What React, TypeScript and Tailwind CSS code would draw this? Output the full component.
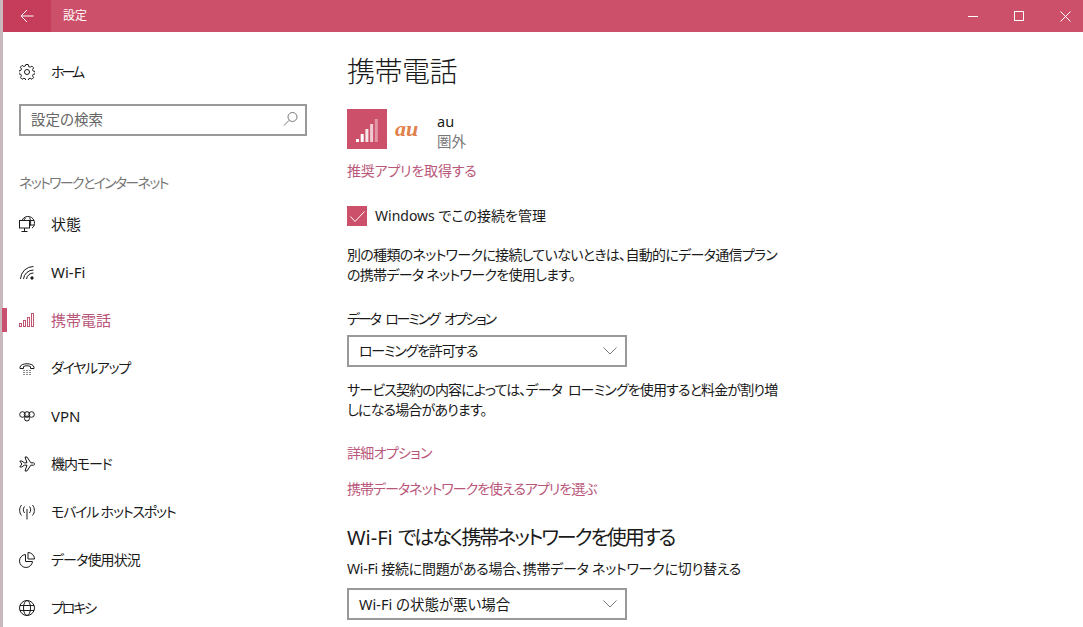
import React from "react";

function Icon({ children }: { children: React.ReactNode }) {
  return (
    <svg width="16" height="16" viewBox="0 0 16 16" fill="none" stroke="#1a1a1a" strokeWidth="1" className="shrink-0">
      {children}
    </svg>
  );
}

const items = [
  {
    label: "状態",
    text: "",
    icon: (
      <Icon>
        <path d="M3 4.500a6.500 6.500 0 0 1 12.500 3c0 2-1 3.600-2.500 4.600" />
        <path d="M6.500 2c-.8.800-1.200 1.500-1.500 2.500M10.500 1.500c1.200 2 1.500 5 .8 8M5.500 4.500h9.500M11 9h4" />
        <rect x="0.500" y="4.500" width="10" height="7.500" />
        <path d="M5.500 12v3M2.500 15.500h6" />
      </Icon>
    ),
  },
  {
    label: "Wi-Fi",
    text: "",
    icon: (
      <Icon>
        <path d="M1.500 15a13 13 0 0 1 13-12.500" />
        <path d="M4.500 15a10 10 0 0 1 10-9" />
        <path d="M7.500 15a7 7 0 0 1 7-6" />
        <circle cx="13" cy="14" r="1.200" fill="#1a1a1a" />
      </Icon>
    ),
  },
  {
    label: "携帯電話",
    text: "",
    active: true,
    icon: (
      <svg width="16" height="16" viewBox="0 0 16 16" fill="none" stroke="#c2536f" strokeWidth="1" className="shrink-0">
        <rect x="0.500" y="11.500" width="2" height="3" />
        <rect x="4.500" y="8.500" width="2" height="6" />
        <rect x="8.500" y="5.500" width="2" height="9" />
        <rect x="12.500" y="1.500" width="2" height="13" />
      </svg>
    ),
  },
  {
    label: "ダイヤルアップ",
    text: "text-[14px] tracking-[-1.300px]",
    icon: (
      <Icon>
        <path d="M1 7.500c0-5 14-5 14 0v1h-3.500v-2c-2-1-5-1-7 0v2H1z" />
        <path d="M4.500 10.500h1M7.500 10.500h1M10.500 10.500h1M4.500 12.500h1M7.500 12.500h1M10.500 12.500h1M4.500 14.500h1M7.500 14.500h1M10.500 14.500h1" />
      </Icon>
    ),
  },
  {
    label: "VPN",
    text: "",
    icon: (
      <Icon>
        <circle cx="3.500" cy="6.500" r="2.800" />
        <circle cx="12.500" cy="6.500" r="2.800" />
        <circle cx="8" cy="6.500" r="2.800" />
        <circle cx="8" cy="10.500" r="2.500" />
      </Icon>
    ),
  },
  {
    label: "機内モード",
    text: "text-[14px] tracking-[-1.100px]",
    icon: (
      <Icon>
        <path d="M.8 5l2 3-2 3h2l2.500-1.800H8L6 15h2l3.800-5.800H14c2.300-.2 2.300-2.200 0-2.400h-2.200L8 1H6l2 5.800H5.300L2.800 5z" />
      </Icon>
    ),
  },
  {
    label: "モバイル ホットスポット",
    text: "text-[14px] tracking-[-1.200px]",
    icon: (
      <Icon>
        <path d="M8 5v10.500" />
        <path d="M5.500 2.500c-1.500 2-1.500 4.500 0 6.500M2.500 1c-2.500 3-2.500 7.500 0 10.500M10.500 2.500c1.500 2 1.500 4.500 0 6.500M13.500 1c2.500 3 2.500 7.500 0 10.500" />
      </Icon>
    ),
  },
  {
    label: "データ使用状況",
    text: "text-[14px] tracking-[-0.900px]",
    icon: (
      <Icon>
        <path d="M6.500 2.500a6.500 6.500 0 1 0 7 7H6.500z" />
        <path d="M9 .5v6.500h6.500a6.500 6.500 0 0 0-6.500-6.500z" />
      </Icon>
    ),
  },
  {
    label: "プロキシ",
    text: "text-[14px] tracking-[-2.200px]",
    icon: (
      <Icon>
        <circle cx="8" cy="8" r="7.500" />
        <ellipse cx="8" cy="8" rx="3.500" ry="7.500" />
        <path d="M1 5.500h14M1 10.500h14" />
      </Icon>
    ),
  },
];

function Select({ label, text }: { label: string; text: string }) {
  return (
    <div className="flex h-[32px] w-[280px] items-center justify-between border-2 border-[#999999] pl-[10px] pr-[8px] text-[#1a1a1a]">
      <span className={text}>{label}</span>
      <svg width="14" height="8" viewBox="0 0 14 8" fill="none" stroke="#7a7a7a" strokeWidth="1">
        <path d="M.5.500 7 7l6.500-6.500" />
      </svg>
    </div>
  );
}

export default function App() {
  return (
    <div className="h-[627px] w-[1083px] overflow-hidden bg-[#c9b9bd] pl-[3px] font-['Noto_Sans','Noto_Sans_CJK_JP',sans-serif] [font-feature-settings:'palt'] leading-none">
      <div className="flex h-full flex-col bg-white">
        {/* title bar */}
        <header className="flex h-[32px] shrink-0 items-center bg-[#cc5069] text-white">
          <div className="flex h-full w-[48px] items-center justify-center bg-[#c63d5b]">
            <svg width="14" height="14" viewBox="0 0 14 14" fill="none" stroke="#fff" strokeWidth="1">
              <path d="M13.500 7H1M7 1 1 7l6 6" />
            </svg>
          </div>
          <span className="ml-[12px] text-[12px]">設定</span>
          <div className="ml-auto mr-[-5px] flex items-center">
            <div className="flex w-[46px] justify-center">
              <div className="h-px w-[10px] bg-white" />
            </div>
            <div className="flex w-[46px] justify-center">
              <div className="h-[10px] w-[10px] border border-white" />
            </div>
            <div className="flex w-[46px] justify-center">
              <svg width="11" height="11" viewBox="0 0 11 11" stroke="#fff" strokeWidth="1">
                <path d="M.5.500l10 10M10.500.500l-10 10" />
              </svg>
            </div>
          </div>
        </header>

        <div className="flex min-h-0 flex-1">
          {/* sidebar */}
          <aside className="w-[344px] shrink-0">
            <div className="mt-[16px] flex h-[48px] items-center pl-[16px] text-[#1a1a1a]">
              <Icon>
                <circle cx="8" cy="8" r="2.500" />
                <path d="M6.800.5h2.400l.4 2 1.500.7 1.800-1.100 1.700 1.700-1.100 1.800.7 1.500 2 .4v2.400l-2 .4-.7 1.500 1.100 1.800-1.700 1.700-1.800-1.100-1.500.7-.4 2H6.800l-.4-2-1.500-.7-1.800 1.100-1.700-1.700 1.100-1.800-.7-1.500-2-.4V6.800l2-.4.7-1.500-1.100-1.800 1.700-1.700 1.800 1.100 1.500-.7z" />
              </Icon>
              <span className="ml-[16px] text-[14px] tracking-[-3px]">ホーム</span>
            </div>
            <div className="ml-[16px] mt-[8px] flex h-[32px] w-[288px] items-center justify-between border-2 border-[#999999] pb-[2px] pl-[10px] pr-[6px] text-[14.500px] text-[#666666]">
              <span>設定の検索</span>
              <svg width="16" height="16" viewBox="0 0 16 16" fill="none" stroke="#777777" strokeWidth="1">
                <circle cx="9.500" cy="6" r="4.500" />
                <path d="M6.300 9.200 1 14.500" />
              </svg>
            </div>
            <div className="ml-[16px] mt-[40px] text-[14px] tracking-[-1.700px] text-[#777777]">ネットワークとインターネット</div>
            <nav className="mt-[10px]">
              {items.map((item) => (
                <div key={item.label} className="relative flex h-[48px] items-center pl-[16px] text-[15px] text-[#1a1a1a]">
                  {item.active && <div className="absolute left-[-1px] top-[12px] h-[24px] w-[5px] bg-[#c9506f]" />}
                  {item.icon}
                  <span className={`ml-[16px] ${item.text} ${item.active ? "text-[#b9577a]" : ""}`}>{item.label}</span>
                </div>
              ))}
            </nav>
          </aside>

          {/* main pane */}
          <main className="min-w-0 flex-1 text-[#1a1a1a]">
            <h1 className="mt-[24px] text-[28px] font-light leading-[30px] tracking-[-0.500px]">携帯電話</h1>
            <div className="mt-[23px] flex h-[40px] items-center">
              <div className="flex h-[40px] w-[40px] items-end justify-center bg-[#cc5069] pb-[7px]">
                <svg width="22" height="23" viewBox="0 0 22 23" fill="#fff">
                  <rect x="0" y="20" width="3" height="3" />
                  <rect x="4.700" y="15" width="3" height="8" />
                  <rect x="9.400" y="10" width="3" height="13" opacity="0.850" />
                  <rect x="14.100" y="5" width="3" height="18" opacity="0.700" />
                  <rect x="18.800" y="0" width="3" height="23" opacity="0.400" />
                </svg>
              </div>
              <span className="ml-[8px] w-[42px] font-['Liberation_Serif',serif] text-[22px] font-bold italic leading-none text-[#e0804a]">au</span>
              <div className="flex flex-col gap-[5px] pt-[4px]">
                <span className="text-[14.500px]">au</span>
                <span className="text-[14.500px] text-[#777777]">圏外</span>
              </div>
            </div>
            <div className="mt-[15px] text-[14px] tracking-[-0.200px] text-[#b9577a]">推奨アプリを取得する</div>
            <div className="mt-[28px] flex h-[20px] items-center">
              <div className="flex h-[20px] w-[20px] items-center justify-center bg-[#cc5069]">
                <svg width="15" height="11" viewBox="0 0 15 11" fill="none" stroke="#fff" strokeWidth="1">
                  <path d="M.5 5.500l4.500 5L14.500.5" />
                </svg>
              </div>
              <span className="ml-[8px] text-[14px]">Windows でこの接続を管理</span>
            </div>
            <p className="mt-[19px] text-[14px] leading-[20px] tracking-[-0.700px]">
              別の種類のネットワークに接続していないときは、自動的にデータ通信プラン
              <br />
              の携帯データ ネットワークを使用します。
            </p>
            <div className="mt-[27px] text-[14px] tracking-[-2.150px] [word-spacing:4px]">データ ローミング オプション</div>
            <div className="mt-[9px]">
              <Select label="ローミングを許可する" text="text-[14px] tracking-[-1.200px]" />
            </div>
            <p className="mt-[13px] text-[14px] leading-[20px] tracking-[-0.850px] [word-spacing:3px]">
              サービス契約の内容によっては、データ ローミングを使用すると料金が割り増
              <br />
              しになる場合があります。
            </p>
            <div className="mt-[26px] text-[14px] tracking-[-0.700px] text-[#b9577a]">詳細オプション</div>
            <div className="mt-[22px] text-[14px] tracking-[-1px] text-[#b9577a]">携帯データネットワークを使えるアプリを選ぶ</div>
            <h2 className="mt-[30px] text-[20px] leading-[24px]">
              Wi-Fi <span className="tracking-[-2.100px]">ではなく携帯ネットワークを使用する</span>
            </h2>
            <div className="mt-[12px] text-[14px] tracking-[-0.250px]">Wi-Fi 接続に問題がある場合、携帯データ ネットワークに切り替える</div>
            <div className="mt-[12px]">
              <Select label="Wi-Fi の状態が悪い場合" text="text-[14.500px]" />
            </div>
          </main>
        </div>
      </div>
    </div>
  );
}
